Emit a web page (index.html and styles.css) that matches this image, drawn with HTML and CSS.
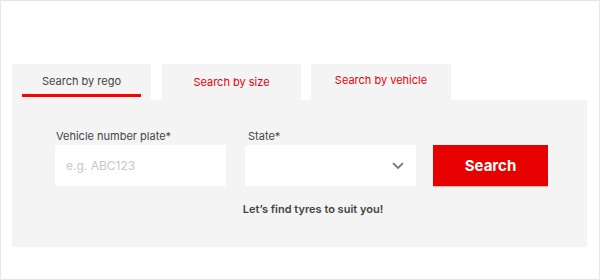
FILE: index.html
```html
<!DOCTYPE html>
<html lang="en">
<head>
    <title>Find tyres</title>
    <meta charset="utf-8" />
    <link rel="stylesheet" href="styles.css">
</head>
<body>
    <div id="frame">
        <div class="tabs">
            <div class="tab active"><span>Search by rego</span></div>
            <div class="tab"><span>Search by size</span></div>
            <div class="tab"><span>Search by vehicle</span></div>
        </div>
        <div id="panel">
            <div class="fields">
                <div class="field plate">
                    <label>Vehicle number plate*</label>
                    <input type="text" placeholder="e.g. ABC123" />
                </div>
                <div class="field state">
                    <label>State*</label>
                    <div class="select">
                        <svg width="12" height="8" viewBox="0 0 12 8"><path d="M1 1.2 L6 6 L11 1.2" fill="none" stroke="#777" stroke-width="1.8"/></svg>
                    </div>
                </div>
                <button class="search">Search</button>
            </div>
            <p class="note">Let’s find tyres to suit you!</p>
        </div>
    </div>
</body>
</html>
```

FILE: styles.css
```css
body { margin: 0; font-family: Inter, "Open Sans", sans-serif; }
#frame { border: 1px solid #e6e6e6; background: #fff; padding: 63px 0 0 11px; width: 587px; height: 215px; }
.tabs { display: flex; gap: 11px; height: 36px; }
.tab { width: 139px; background: #f4f4f4; font-size: 11px; color: #e8000b; display: flex; justify-content: center; padding-top: 10px; box-sizing: border-box; }
.tab + .tab { padding-top: 11px; }
.tab + .tab + .tab { width: 140px; margin-left: -1px; padding-top: 9px; }
.tab.active { color: #444; padding: 7px 10px 0; flex-direction: column; align-items: stretch; text-align: center; }
.tab.active span { border-bottom: 3px solid #f00; padding-bottom: 6px; }
#panel { width: 575px; height: 147px; background: #f4f4f4; padding: 29px 0 0 43px; box-sizing: border-box; }
.fields { display: flex; align-items: flex-end; }
.field { display: flex; flex-direction: column; }
.field label { font-size: 11px; color: #444; margin: 0 0 2px 1px; }
.plate { width: 171px; margin-right: 19px; }
.state { width: 171px; margin-right: 17px; }
.state label { margin-left: 3px; }
.field input { height: 41px; border: 0; padding: 0 11px; font-family: inherit; font-size: 12px; box-sizing: border-box; outline: none; }
.field input::placeholder { color: #c8c8c8; }
.select { height: 41px; background: #fff; display: flex; align-items: center; justify-content: flex-end; padding-right: 12px; }
.search { width: 115px; height: 41px; border: 0; background: #e60000; color: #fff; font-family: inherit; font-weight: 700; font-size: 15px; box-shadow: 0 1px 0 #f3b3b3; }
.note { margin: 16px 0 0 -16px; text-align: center; font-size: 11px; font-weight: 600; color: #444; }
```
